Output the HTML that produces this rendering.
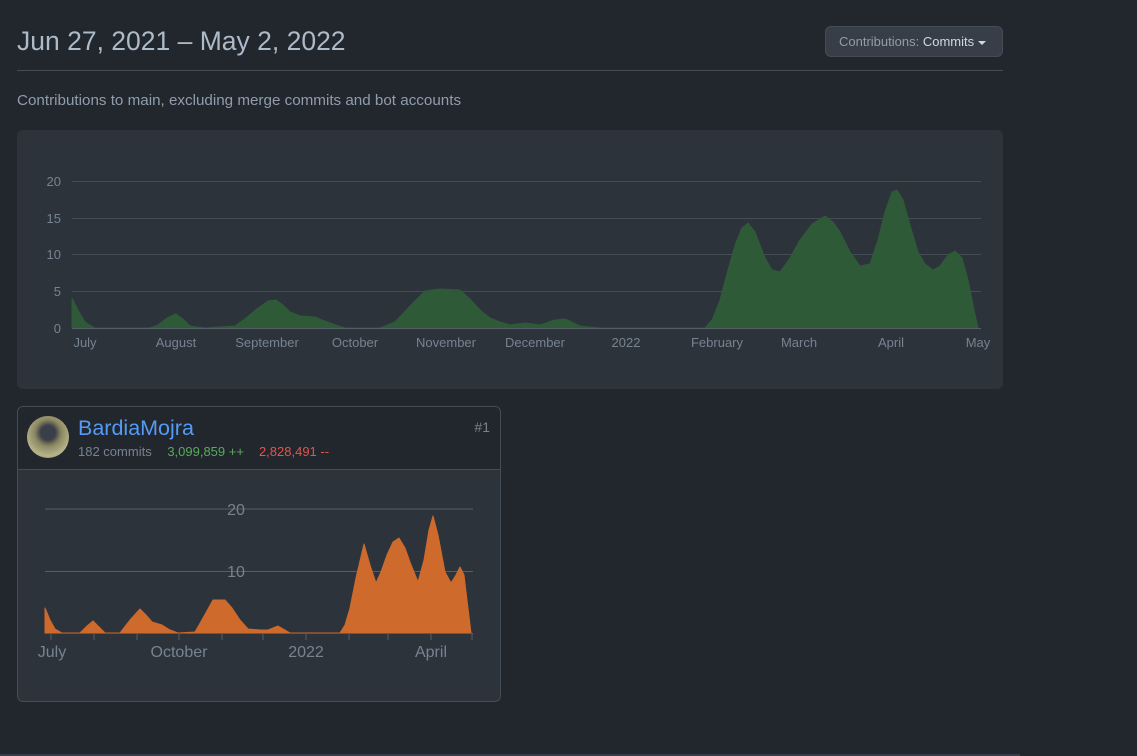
<!DOCTYPE html>
<html><head><meta charset="utf-8"><style>
*{margin:0;padding:0;box-sizing:border-box}
body{width:1137px;height:756px;background:#22272e;font-family:"Liberation Sans",sans-serif;position:relative;overflow:hidden;color:#adbac7}
.abs{position:absolute}
</style></head><body>
<div class="abs" style="left:17px;top:26px;font-size:26.5px;color:#adbac7;">Jun 27, 2021 – May 2, 2022</div>
<div class="abs" style="left:825px;top:26px;width:178px;height:31px;background:#373e47;border:1px solid #444c56;border-radius:6px;font-size:13px;line-height:29px;padding-left:13px;color:#909dab;">Contributions: <span style="color:#cdd9e5">Commits</span><span style="display:inline-block;margin-left:4px;border-left:4px solid transparent;border-right:4px solid transparent;border-top:4px solid #cdd9e5;vertical-align:middle"></span></div>
<div class="abs" style="left:17px;top:70px;width:986px;height:1px;background:#444c56"></div>
<div class="abs" style="left:17px;top:92px;font-size:15.2px;color:#909dab;">Contributions to main, excluding merge commits and bot accounts</div>
<div class="abs" style="left:17px;top:130px;width:986px;height:259px;background:#2d333b;border-radius:6px"></div>
<svg class="abs" style="left:0;top:0" width="1137" height="756">
<g stroke="#444c56" stroke-width="1">
<line x1="72" y1="181.5" x2="981" y2="181.5"/><line x1="72" y1="218.5" x2="981" y2="218.5"/><line x1="72" y1="254.5" x2="981" y2="254.5"/><line x1="72" y1="291.5" x2="981" y2="291.5"/>
</g>
<path fill="#2e5a38" stroke="#2e5a38" stroke-linejoin="round" d="M72,328 L72,298 L78,310 L85,322 L95,328 L150,328 L158,325 L167,318 L176,314 L183,319 L190,326 L205,328 L235,326 L246,318 L258,308 L268,301 L276,300 L283,305 L290,312 L300,316 L315,317 L322,320 L330,323 L345,328 L380,328 L395,322 L410,306 L425,291 L440,289 L460,290 L470,299 L480,310 L490,318 L500,322 L510,325 L525,323 L540,325 L555,320 L565,319 L580,326 L600,328 L705,328 L712,320 L720,300 L728,270 L735,245 L742,228 L748,223 L755,232 L765,258 L772,270 L780,272 L790,258 L800,240 L812,224 L825,216 L833,222 L840,232 L850,252 L860,266 L870,264 L878,240 L885,212 L892,192 L897,190 L903,200 L910,225 L918,252 L925,264 L933,270 L940,266 L948,255 L955,251 L962,258 L968,280 L974,310 L978,328 Z"/>
<line x1="72" y1="328.5" x2="981" y2="328.5" stroke="#545d68"/>
<g font-size="13" fill="#768390" text-anchor="end"><text x="61" y="186">20</text><text x="61" y="223">15</text><text x="61" y="259">10</text><text x="61" y="296">5</text><text x="61" y="333">0</text></g>
<g font-size="13" fill="#768390" text-anchor="middle">
<text x="85" y="347">July</text><text x="176" y="347">August</text><text x="267" y="347">September</text><text x="355" y="347">October</text><text x="446" y="347">November</text><text x="535" y="347">December</text><text x="626" y="347">2022</text><text x="717" y="347">February</text><text x="799" y="347">March</text><text x="891" y="347">April</text><text x="978" y="347">May</text></g>
</svg>
<div class="abs" style="left:17px;top:406px;width:484px;height:296px;background:#2d333b;border:1px solid #444c56;border-radius:6px;overflow:hidden">
<div style="height:63px;background:#22272e;border-bottom:1px solid #444c56;position:relative">
<div class="abs" style="left:9px;top:9px;width:42px;height:42px;border-radius:50%;background:radial-gradient(circle at 50% 40%,#3a3f4a 0 22%,#8a8660 40%,#b8b48a 70%,#6f7a5a 100%)"></div>
<div class="abs" style="left:60px;top:9px;font-size:21.5px;color:#539bf5">BardiaMojra</div>
<div class="abs" style="left:60px;top:37px;font-size:13px;color:#768390;white-space:nowrap">182 commits <span style="color:#57ab5a;margin-left:12px">3,099,859 ++</span><span style="color:#e5534b;margin-left:15px">2,828,491 --</span></div>
<div class="abs" style="right:10px;top:12px;font-size:14px;color:#768390">#1</div>
</div>
</div>
<svg class="abs" style="left:0;top:0" width="1137" height="756">
<g stroke="#545d68"><line x1="45" y1="509" x2="473" y2="509"/><line x1="45" y1="571.5" x2="473" y2="571.5"/></g>
<path fill="#cd6a2c" stroke="#cd6a2c" stroke-linejoin="round" d="M45,633 L45,608 L50,620 L55,629 L62,633 L80,633 L87,626 L93,621 L99,627 L105,633 L120,633 L130,620 L140,609 L146,615 L152,622 L162,625 L170,630 L178,633 L195,632 L203,618 L213,600 L225,600 L232,608 L240,620 L248,629 L260,630 L268,630 L278,626 L285,630 L290,633 L340,633 L345,625 L350,608 L356,578 L364,544 L370,565 L376,583 L381,572 L387,555 L393,542 L399,538 L405,548 L410,562 L418,582 L424,560 L429,530 L433,516 L438,535 L445,572 L451,583 L456,575 L460,567 L464,575 L467,600 L471,633 Z"/>
<line x1="45" y1="633.5" x2="473" y2="633.5" stroke="#545d68"/>
<g stroke="#545d68"><line x1="51" y1="634" x2="51" y2="640"/><line x1="94" y1="634" x2="94" y2="640"/><line x1="137" y1="634" x2="137" y2="640"/><line x1="179" y1="634" x2="179" y2="640"/><line x1="222" y1="634" x2="222" y2="640"/><line x1="263" y1="634" x2="263" y2="640"/><line x1="306" y1="634" x2="306" y2="640"/><line x1="349" y1="634" x2="349" y2="640"/><line x1="388" y1="634" x2="388" y2="640"/><line x1="431" y1="634" x2="431" y2="640"/><line x1="472" y1="634" x2="472" y2="640"/></g>
<g font-size="16" fill="#768390" text-anchor="middle"><text x="236" y="515">20</text><text x="236" y="577">10</text>
<text x="52" y="657">July</text><text x="179" y="657">October</text><text x="306" y="657">2022</text><text x="431" y="657">April</text></g>
<rect x="0" y="754" width="1020" height="2" fill="#373e47"/>
</svg>
</body></html>
